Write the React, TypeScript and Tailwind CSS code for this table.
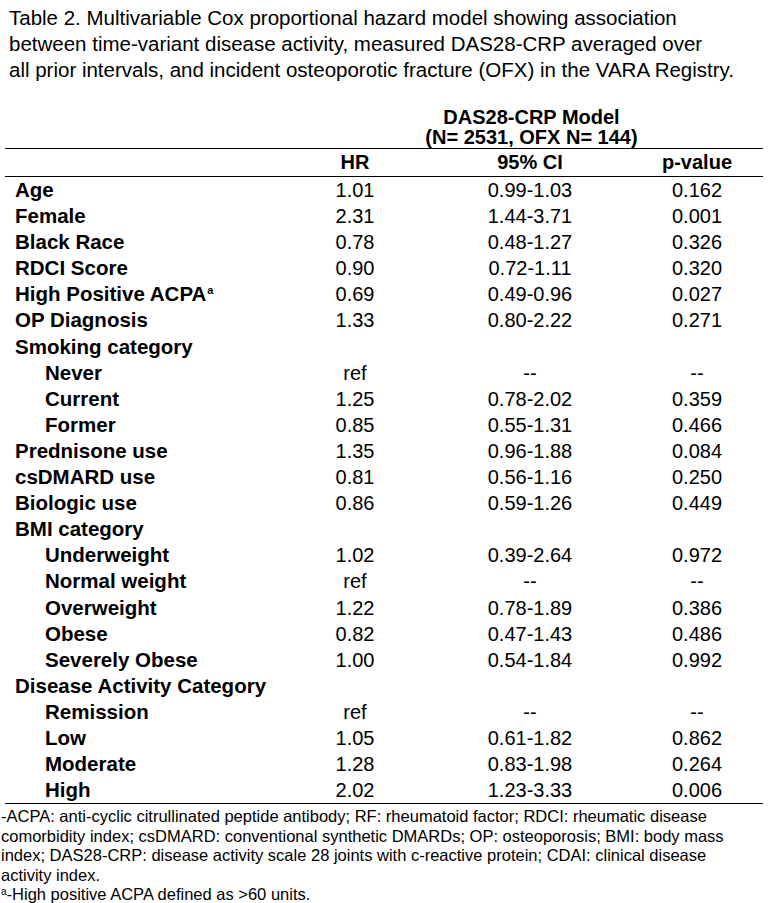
const rows: { label: string; indent?: boolean; hr?: string; ci?: string; p?: string; sup?: string }[] = [
  { label: "Age", hr: "1.01", ci: "0.99-1.03", p: "0.162" },
  { label: "Female", hr: "2.31", ci: "1.44-3.71", p: "0.001" },
  { label: "Black Race", hr: "0.78", ci: "0.48-1.27", p: "0.326" },
  { label: "RDCI Score", hr: "0.90", ci: "0.72-1.11", p: "0.320" },
  { label: "High Positive ACPA", sup: "a", hr: "0.69", ci: "0.49-0.96", p: "0.027" },
  { label: "OP Diagnosis", hr: "1.33", ci: "0.80-2.22", p: "0.271" },
  { label: "Smoking category" },
  { label: "Never", indent: true, hr: "ref", ci: "--", p: "--" },
  { label: "Current", indent: true, hr: "1.25", ci: "0.78-2.02", p: "0.359" },
  { label: "Former", indent: true, hr: "0.85", ci: "0.55-1.31", p: "0.466" },
  { label: "Prednisone use", hr: "1.35", ci: "0.96-1.88", p: "0.084" },
  { label: "csDMARD use", hr: "0.81", ci: "0.56-1.16", p: "0.250" },
  { label: "Biologic use", hr: "0.86", ci: "0.59-1.26", p: "0.449" },
  { label: "BMI category" },
  { label: "Underweight", indent: true, hr: "1.02", ci: "0.39-2.64", p: "0.972" },
  { label: "Normal weight", indent: true, hr: "ref", ci: "--", p: "--" },
  { label: "Overweight", indent: true, hr: "1.22", ci: "0.78-1.89", p: "0.386" },
  { label: "Obese", indent: true, hr: "0.82", ci: "0.47-1.43", p: "0.486" },
  { label: "Severely Obese", indent: true, hr: "1.00", ci: "0.54-1.84", p: "0.992" },
  { label: "Disease Activity Category" },
  { label: "Remission", indent: true, hr: "ref", ci: "--", p: "--" },
  { label: "Low", indent: true, hr: "1.05", ci: "0.61-1.82", p: "0.862" },
  { label: "Moderate", indent: true, hr: "1.28", ci: "0.83-1.98", p: "0.264" },
  { label: "High", indent: true, hr: "2.02", ci: "1.23-3.33", p: "0.006" },
];

const cols = "grid grid-cols-[295px_110px_240px_94px]";

export default function App() {
  return (
    <div className="w-[768px] h-[903px] bg-white text-black font-['Liberation_Sans',Arial,sans-serif] overflow-hidden">
      {/* caption */}
      <p className="pl-[9px] pt-[5px] text-[20.5px] leading-[26px] whitespace-nowrap">
        Table 2. Multivariable Cox proportional hazard model showing association
        <br />
        between time-variant disease activity, measured DAS28-CRP averaged over
        <br />
        all prior intervals, and incident osteoporotic fracture (OFX) in the VARA Registry.
      </p>

      <div className="ml-[5px] w-[758px] mt-[24px]">
        {/* model header */}
        <div className="flex border-b border-black">
          <div className="w-[295px]" />
          <div className="flex-1 text-center font-bold text-[20px] leading-[20px] pb-[1px]">
            DAS28-CRP Model
            <br />
            (N= 2531, OFX N= 144)
          </div>
        </div>

        <div className={`${cols} border-b border-black font-bold text-[20px] leading-[27px] text-center`}>
          <div />
          <div>HR</div>
          <div>95% CI</div>
          <div>p-value</div>
        </div>

        <div className="border-b border-black">
          {rows.map((r) => (
            <div key={r.label} className={`${cols} text-[20px] leading-[26.1px]`}>
              <div className={`font-bold text-[20.5px] ${r.indent ? "pl-[40px]" : "pl-[10px]"}`}>
                {r.label}
                {r.sup && (
                  <span className="inline-block align-top text-[11px] leading-[14px] ml-[1px] mt-[2px]">{r.sup}</span>
                )}
              </div>
              <div className="text-center">{r.hr}</div>
              <div className="text-center">{r.ci}</div>
              <div className="text-center">{r.p}</div>
            </div>
          ))}
        </div>
      </div>

      {/* footnotes */}
      <div className="pl-[1px] pr-[10px] text-[16.5px] leading-[19.5px] pt-[3px]">
        <p>
          -ACPA: anti-cyclic citrullinated peptide antibody; RF: rheumatoid factor; RDCI: rheumatic disease
          comorbidity index; csDMARD: conventional synthetic DMARDs; OP: osteoporosis; BMI: body mass
          index; DAS28-CRP: disease activity scale 28 joints with c-reactive protein; CDAI: clinical disease
          activity index.
        </p>
        <p>
          <span className="inline-block align-top text-[10px] leading-[12px] mt-[1px]">a</span>-High positive ACPA
          defined as &gt;60 units.
        </p>
      </div>
    </div>
  );
}
